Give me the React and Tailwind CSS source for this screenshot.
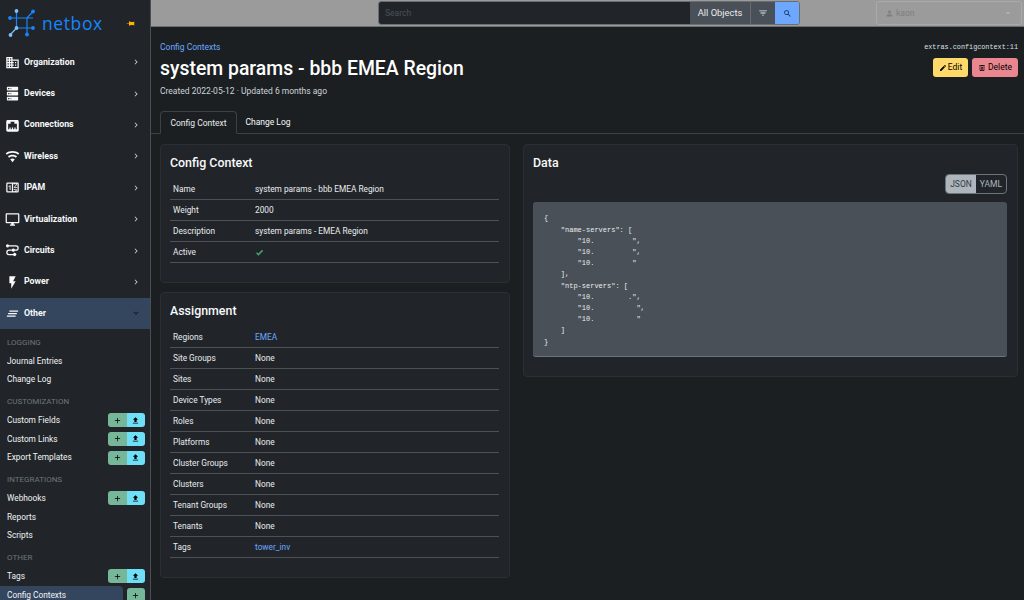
import React from 'react';

const FONT = 'font-["Roboto",sans-serif]';

const paths = {
  domain: 'M18,15H16V17H18M18,11H16V13H18M20,19H12V17H14V15H12V13H14V11H12V9H20M10,7H8V5H10M10,11H8V9H10M10,15H8V13H10M10,19H8V17H10M6,7H4V5H6M6,11H4V9H6M6,15H4V13H6M6,19H4V17H6M12,7V3H2V21H22V7H12Z',
  server: 'M4,1H20A1,1 0 0,1 21,2V6A1,1 0 0,1 20,7H4A1,1 0 0,1 3,6V2A1,1 0 0,1 4,1M4,9H20A1,1 0 0,1 21,10V14A1,1 0 0,1 20,15H4A1,1 0 0,1 3,14V10A1,1 0 0,1 4,9M4,17H20A1,1 0 0,1 21,18V22A1,1 0 0,1 20,23H4A1,1 0 0,1 3,22V18A1,1 0 0,1 4,17M9,5H10V3H9V5M9,13H10V11H9V13M9,21H10V19H9V21M5,3V5H7V3H5M5,11V13H7V11H5M5,19V21H7V19H5Z',
  ethernet: 'M7,15H9V18H11V15H13V18H15V15H17V18H19V9H15V6H9V9H5V18H7V15M4.38,3H19.63C20.94,3 22,4.06 22,5.38V19.63A2.37,2.37 0 0,1 19.63,22H4.38C3.06,22 2,20.94 2,19.63V5.38C2,4.06 3.06,3 4.38,3Z',
  wifi: 'M12,21L15.6,16.2C14.6,15.45 13.35,15 12,15C10.65,15 9.4,15.45 8.4,16.2L12,21M12,3C7.95,3 4.21,4.34 1.2,6.6L3,9C5.5,7.12 8.62,6 12,6C15.38,6 18.5,7.12 21,9L22.8,6.6C19.79,4.34 16.05,3 12,3M12,9C9.3,9 6.81,9.89 4.8,11.4L6.6,13.8C8.1,12.67 9.97,12 12,12C14.03,12 15.9,12.67 17.4,13.8L19.2,11.4C17.19,9.89 14.7,9 12,9Z',
  counter: 'M4,4H20A2,2 0 0,1 22,6V18A2,2 0 0,1 20,20H4A2,2 0 0,1 2,18V6A2,2 0 0,1 4,4M4,6V18H11V6H4M20,18V6H18.76C19,6.54 18.95,7.07 18.95,7.13C18.88,7.8 18.41,8.5 18.24,8.75L15.91,11.3L19.23,11.28L19.24,12.5L14.04,12.47L14,11.47C14,11.47 17.05,8.24 17.2,7.95C17.34,7.67 17.91,6 16.5,6C15.27,6.05 15.41,7.3 15.41,7.3L13.87,7.3C13.87,7.3 13.88,6.65 14.25,6H13V18H15.58L15.57,17.14L16.54,17.13C16.54,17.13 17.45,16.97 17.46,16.08C17.5,15.08 16.65,15.08 16.5,15.08C16.37,15.08 15.43,15.13 15.43,15.95H13.91C13.91,15.95 13.95,13.89 16.5,13.89C19.1,13.89 18.96,15.91 18.96,15.91C18.96,15.91 19,17.16 17.85,17.63L18.37,18H20M8.92,16H7.42V10.2L5.62,10.76V9.53L8.76,8.41H8.92V16Z',
  monitor: 'M21,16H3V4H21M21,2H3C1.89,2 1,2.89 1,4V16A2,2 0 0,0 3,18H10V20H8V22H16V20H14V18H21A2,2 0 0,0 23,16V4C23,2.89 22.1,2 21,2Z',
  circuits: 'M4,2A2.5,2.5 0 0,0 4,7C5,7 5.9,6.4 6.3,5.5H17.5A2.5,2.5 0 0,1 17.5,10.5H15.7A2.5,2.5 0 0,0 11,10.5H6.5A4.5,4.5 0 0,0 6.5,19.5H13.2A2.5,2.5 0 1,0 13.2,17.5H6.5A2.5,2.5 0 0,1 6.5,12.5H11A2.5,2.5 0 0,0 15.7,12.5H17.5A4.5,4.5 0 0,0 17.5,3.5H6.3C5.9,2.6 5,2 4,2Z',
  flash: 'M7,2V13H10V22L17,10H13L17,2H7Z',
  other: 'M5,13H19V11H5M3,17H17V15H3M7,7V9H21V7',
  plus: 'M19,13H13V19H11V13H5V11H11V5H13V11H19V13Z',
  upload: 'M9,16V10H5L12,3L19,10H15V16H9M5,20V18H19V20H5Z',
  pencil: 'M20.71,7.04C21.1,6.65 21.1,6 20.71,5.63L18.37,3.29C18,2.9 17.35,2.9 16.96,3.29L15.12,5.12L18.87,8.87M3,17.25V21H6.75L17.81,9.93L14.06,6.18L3,17.25Z',
  trash: 'M9,3V4H4V6H5V19A2,2 0 0,0 7,21H17A2,2 0 0,0 19,19V6H20V4H15V3H9M7,6H17V19H7V6M9,8V17H11V8H9M13,8V17H15V8H13Z',
  check: 'M9,20.42L2.79,14.21L5.62,11.38L9,14.77L18.88,4.88L21.71,7.71L9,20.42Z',
  search: 'M9.5,3A6.5,6.5 0 0,1 16,9.5C16,11.11 15.41,12.59 14.44,13.73L14.71,14H15.5L20.5,19L19,20.5L14,15.5V14.71L13.73,14.44C12.59,15.41 11.11,16 9.5,16A6.5,6.5 0 0,1 3,9.5A6.5,6.5 0 0,1 9.5,3M9.5,5C7,5 5,7 5,9.5C5,12 7,14 9.5,14C12,14 14,12 14,9.5C14,7 12,5 9.5,5Z',
  filter: 'M6,13H18V11H6M3,6V8H21V6M10,18H14V16H10V18Z',
  account: 'M12,4A4,4 0 0,1 16,8A4,4 0 0,1 12,12A4,4 0 0,1 8,8A4,4 0 0,1 12,4M12,14C16.42,14 20,15.79 20,18V20H4V18C4,15.79 7.58,14 12,14Z',
  right: 'M8.59,16.58L13.17,12L8.59,7.41L10,6L16,12L10,18L8.59,16.58Z',
  down: 'M7.41,8.58L12,13.17L16.59,8.58L18,10L12,16L6,10L7.41,8.58Z',
  caret: 'M7,10L12,15L17,10H7Z',
  pin: 'M16,12V4H17V2H7V4H8V12L6,14V16H11.2V22H12.8V16H18V14L16,12Z',
};

function Icon({ name, className = '' }) {
  return (
    <svg viewBox="0 0 24 24" className={`shrink-0 fill-current ${className}`}>
      <path d={paths[name]} />
    </svg>
  );
}

function Logo() {
  return (
    <svg viewBox="8 8 28 28" className="w-[28px] h-[28px] shrink-0">
      <g stroke="#1685fc" strokeWidth="1.2" fill="none">
        <path d="M16.5 10V27M27 17V33M10 17H33M16.5 27H33M27 17L33 10.5" />
        <path d="M16.5 27L10 34" stroke="#7cc0f8" />
      </g>
      <circle cx="16.5" cy="10" r="1.9" fill="#7cc0f8" />
      <circle cx="10" cy="17" r="1.9" fill="#1685fc" />
      <circle cx="33" cy="10.5" r="1.9" fill="#1685fc" />
      <circle cx="33" cy="27" r="1.9" fill="#1685fc" />
      <circle cx="27" cy="33.5" r="1.9" fill="#1685fc" />
      <circle cx="16.5" cy="27" r="1.9" fill="#7cc0f8" />
      <circle cx="10.5" cy="34" r="1.9" fill="#7cc0f8" />
    </svg>
  );
}

const mainNav = [
  { label: 'Organization', icon: 'domain' },
  { label: 'Devices', icon: 'server' },
  { label: 'Connections', icon: 'ethernet' },
  { label: 'Wireless', icon: 'wifi' },
  { label: 'IPAM', icon: 'counter' },
  { label: 'Virtualization', icon: 'monitor' },
  { label: 'Circuits', icon: 'circuits' },
  { label: 'Power', icon: 'flash' },
];

const subNav = [
  {
    title: 'Logging', items: [
      { label: 'Journal Entries' },
      { label: 'Change Log' },
    ],
  },
  {
    title: 'Customization', items: [
      { label: 'Custom Fields', add: true, imp: true },
      { label: 'Custom Links', add: true, imp: true },
      { label: 'Export Templates', add: true, imp: true },
    ],
  },
  {
    title: 'Integrations', items: [
      { label: 'Webhooks', add: true, imp: true },
      { label: 'Reports' },
      { label: 'Scripts' },
    ],
  },
  {
    title: 'Other', items: [
      { label: 'Tags', add: true, imp: true },
      { label: 'Config Contexts', add: true, active: true },
    ],
  },
];

function NavRow({ item }) {
  return (
    <div className="h-[31.4px] flex items-center pl-[5px] pr-[9px] text-[#f8f9fa]">
      <div className="w-[19px] flex justify-start"><Icon name={item.icon} className="w-[15px] h-[15px]" /></div>
      <span className="flex-1 text-[8.8px] font-bold">{item.label}</span>
      <Icon name="right" className="w-[10px] h-[10px] text-[#c9cdd1]" />
    </div>
  );
}

function SubRow({ item }) {
  return (
    <div className="h-[18.7px] flex items-center gap-[4px] text-[8.3px] text-[#f1f3f5]">
      <div className={`flex-1 h-full flex items-center pl-[7px] ${item.active ? 'bg-[#33465e] rounded-r-[4px]' : ''}`}>
        {item.label}
      </div>
      {(item.add || item.imp) && (
        <div className="flex h-[14px] rounded-[3px] overflow-hidden text-black">
          {item.add && (
            <span className="w-[18.5px] bg-[#75b798] flex items-center justify-center"><Icon name="plus" className="w-[9px] h-[9px]" /></span>
          )}
          {item.imp && (
            <span className="w-[18.5px] bg-[#6edff6] flex items-center justify-center"><Icon name="upload" className="w-[9px] h-[9px]" /></span>
          )}
        </div>
      )}
    </div>
  );
}

function Sidebar() {
  return (
    <aside className="w-[151px] h-full shrink-0 bg-[#212529] border-r border-[#4a4f55] overflow-hidden">
      <div className="h-[46.6px] flex items-center pl-[8px] pr-[14px]">
        <Logo />
        <span className={`ml-[6px] flex-1 text-[17.5px] leading-none text-[#1685fc] tracking-[0.6px] font-["Open_Sans",sans-serif]`}>netbox</span>
        <Icon name="pin" className="w-[9px] h-[9px] rotate-90 text-[#ffb300] mr-[1px]" />
      </div>
      {mainNav.map(item => <NavRow key={item.label} item={item} />)}
      <div className="h-[31.4px] flex items-center pl-[5px] pr-[9px] bg-[#33465e] text-[#f8f9fa]">
        <div className="w-[19px]"><Icon name="other" className="w-[15px] h-[15px]" /></div>
        <span className="flex-1 text-[8.8px] font-bold">Other</span>
        <Icon name="down" className="w-[10px] h-[10px] text-[#12161a]" />
      </div>
      <div className="pl-0 pr-[5px] pt-[1.4px]">
        {subNav.map(group => (
          <div key={group.title} className="mb-[1px]">
            <div className="h-[21px] pt-[3px] flex items-center pl-[7px] text-[8px] uppercase text-[#6c757d]">{group.title}</div>
            {group.items.map(item => <SubRow key={item.label} item={item} />)}
          </div>
        ))}
      </div>
    </aside>
  );
}

function TopBar() {
  return (
    <div className="h-[27px] shrink-0 bg-[#9b9b9b] border-b border-[#6c6f72] flex items-center pl-[227px] pr-[2px]">
      <div className="w-[422px] h-[24px] flex rounded-[3px] overflow-hidden border border-[#6a6e72] text-[9.4px]">
        <div className="w-[311px] bg-[#212529] flex items-center pl-[6px] text-[8.5px] text-[#495057]">Search</div>
        <div className="w-[61px] bg-[#495057] border-r border-[#666b70] flex items-center justify-center text-[#e9ecef]">All Objects</div>
        <div className="w-[24px] bg-[#495057] flex items-center justify-center text-[#e9ecef]"><Icon name="filter" className="w-[10px] h-[10px]" /></div>
        <div className="flex-1 bg-[#6ea8fe] flex items-center justify-center text-[#0b2a55]"><Icon name="search" className="w-[9px] h-[9px]" /></div>
      </div>
      <div className="ml-auto w-[146px] h-[24px] rounded-[3px] border border-[#aaaaaa] flex items-center pl-[8px] pr-[8px] text-[8.5px] text-[#7c7f82]">
        <Icon name="account" className="w-[9px] h-[9px] mr-[2px]" />
        <span className="flex-1">kaon</span>
        <Icon name="caret" className="w-[10px] h-[10px] text-[#b8b8b8]" />
      </div>
    </div>
  );
}

function KVTable({ rows }) {
  return (
    <div>
      {rows.map(row => (
        <div key={row.label} className="h-[20.95px] flex items-center border-b border-[#4c5156] text-[8.3px] text-[#e9ecef] pl-[3px]">
          <div className="w-[82px]">{row.label}</div>
          <div className={row.link ? 'text-[#6ea8fe]' : ''}>
            {row.check ? <Icon name="check" className="w-[9px] h-[9px] text-[#479f76]" /> : row.value}
          </div>
        </div>
      ))}
    </div>
  );
}

const contextRows = [
  { label: 'Name', value: 'system params - bbb EMEA Region' },
  { label: 'Weight', value: '2000' },
  { label: 'Description', value: 'system params - EMEA Region' },
  { label: 'Active', check: true },
];

const assignmentRows = [
  { label: 'Regions', value: 'EMEA', link: true },
  { label: 'Site Groups', value: 'None' },
  { label: 'Sites', value: 'None' },
  { label: 'Device Types', value: 'None' },
  { label: 'Roles', value: 'None' },
  { label: 'Platforms', value: 'None' },
  { label: 'Cluster Groups', value: 'None' },
  { label: 'Clusters', value: 'None' },
  { label: 'Tenant Groups', value: 'None' },
  { label: 'Tenants', value: 'None' },
  { label: 'Tags', value: 'tower_inv', link: true },
];

const jsonText = `{
    "name-servers": [
        "10.         ",
        "10.         ",
        "10.         "
    ],
    "ntp-servers": [
        "10.        .",
        "10.          ",
        "10.          "
    ]
}`;

function Card({ title, className = '', children }) {
  return (
    <div className={`bg-[#212529] border border-[#2a2f34] rounded-[4px] pl-[9px] pr-[10px] ${className}`}>
      <h5 className="text-[12.4px] leading-none font-medium text-[#f8f9fa] pt-[12px] pb-[10px]">{title}</h5>
      {children}
    </div>
  );
}

export default function App() {
  return (
    <div className={`w-[1024px] h-[600px] flex overflow-hidden bg-[#1b1f22] ${FONT}`}>
      <Sidebar />
      <div className="flex-1 min-w-0 flex flex-col">
        <TopBar />
        <div className="flex items-start justify-between pl-[9px] pr-[6px] pt-[14px]">
          <div>
            <div className="text-[8.5px] leading-[12px] text-[#6ea8fe]">Config Contexts</div>
            <h1 className="text-[19.4px] leading-[26px] mt-[3px] font-medium text-white">system params - bbb EMEA Region</h1>
            <div className="text-[8.5px] leading-[12px] mt-[3px] text-[#ced4da]">Created 2022-05-12 · Updated 6 months ago</div>
          </div>
          <div className="flex flex-col items-end">
            <div className={`text-[6.8px] leading-[10px] text-[#dee2e6] font-["Liberation_Mono",monospace] mt-[1px]`}>extras.configcontext:11</div>
            <div className="flex gap-[4px] mt-[6px] text-[8.5px] text-black">
              <div className="h-[19px] w-[35px] rounded-[3px] bg-[#ffda6a] flex items-center justify-center gap-[1px]"><Icon name="pencil" className="w-[8px] h-[8px]" />Edit</div>
              <div className="h-[19px] w-[46px] rounded-[3px] bg-[#ea868f] flex items-center justify-center gap-[2px]"><Icon name="trash" className="w-[8px] h-[8px]" />Delete</div>
            </div>
          </div>
        </div>
        <div className="h-[23px] mt-[14px] shrink-0 border-b border-[#3c4146] flex pl-[9px] text-[8.5px] text-[#e9ecef]">
          <div className="w-[77px] h-[23px] pt-[1px] rounded-t-[4px] border border-[#3c4146] border-b-[#1b1f22] bg-[#1b1f22] flex items-center justify-center">Config Context</div>
          <div className="w-[62px] h-[22px] pt-[1px] flex items-center justify-center text-[#f8f9fa]">Change Log</div>
        </div>
        <div className="flex-1 flex gap-[13px] pl-[9px] pr-[6px] pt-[10px]">
          <div className="w-[350px] shrink-0 flex flex-col gap-[9px]">
            <Card title="Config Context" className="h-[139px]">
              <KVTable rows={contextRows} />
            </Card>
            <Card title="Assignment" className="h-[286px]">
              <KVTable rows={assignmentRows} />
            </Card>
          </div>
          <div className="flex-1">
            <Card title="Data" className="h-[233px]">
              <div className="flex justify-end mt-[-5px]">
                <div className="flex h-[20px] rounded-[4px] border border-[#6c757d] overflow-hidden text-[8.5px]">
                  <span className="w-[30px] bg-[#adb5bd] text-[#343a40] flex items-center justify-center">JSON</span>
                  <span className="w-[30px] text-[#adb5bd] flex items-center justify-center">YAML</span>
                </div>
              </div>
              <pre className={`mt-[8px] h-[155px] bg-[#495057] rounded-[3px] border-b border-[#6c757d] pl-[11px] pr-[10px] pt-[11px] text-[7px] leading-[11.2px] text-[#e9ecef] font-["Liberation_Mono",monospace]`}>{jsonText}</pre>
            </Card>
          </div>
        </div>
      </div>
    </div>
  );
}
